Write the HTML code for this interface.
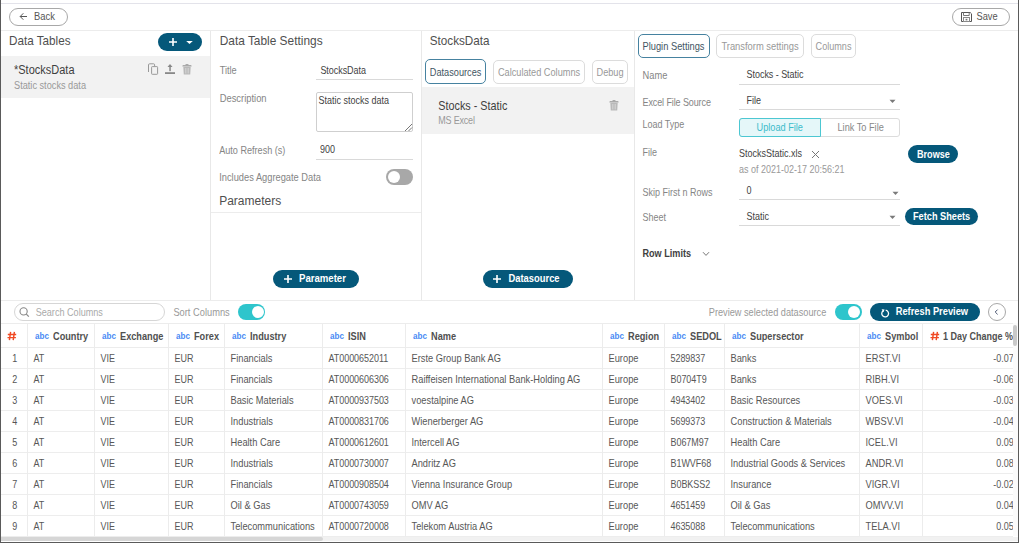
<!DOCTYPE html>
<html><head><meta charset="utf-8"><style>
html,body{margin:0;padding:0;width:1019px;height:543px;overflow:hidden;background:#fff;}
body{position:relative;font-family:"Liberation Sans", sans-serif;}
body>div,body>svg{position:absolute;white-space:nowrap;}
</style></head><body>
<div style="left:1px;top:3px;width:1017px;height:1px;background:#e3e3ea"></div>
<div style="left:1px;top:30px;width:1017px;height:1px;background:#ececec"></div>
<div style="left:1px;top:300px;width:1017px;height:1px;background:#ececec"></div>
<div style="left:9px;top:8px;width:59px;height:18px;box-sizing:border-box;border:1px solid #a8a8a8;border-radius:9px"></div>
<svg style="left:19px;top:12px" width="9" height="9" viewBox="0 0 9 9"><path d="M1.2 4.5H8M4.3 1.3L1.2 4.5L4.3 7.7" fill="none" stroke="#555" stroke-width="1"/></svg>
<div style="left:34px;top:12px;font-size:9.4px;line-height:9.4px;color:#555;transform:scaleY(1.11);transform-origin:0 7.99px;">Back</div>
<div style="left:952px;top:8px;width:58px;height:18px;box-sizing:border-box;border:1px solid #a8a8a8;border-radius:9px"></div>
<svg style="left:961px;top:12px" width="11" height="10" viewBox="0 0 11 10"><path d="M0.5 0.5H9.2L10.5 1.8V9.5H0.5Z" fill="none" stroke="#555" stroke-width="1"/><path d="M2.5 0.5V3.5H8.2V0.5" fill="none" stroke="#777" stroke-width="1"/><rect x="2.5" y="5.5" width="6" height="4" fill="none" stroke="#8a8a8a" stroke-width="1"/><rect x="4.6" y="6.8" width="1.8" height="1.6" fill="#777"/></svg>
<div style="left:976.5px;top:13px;font-size:9.3px;line-height:9.3px;color:#555;transform:scaleY(1.11);transform-origin:0 7.91px;">Save</div>
<div style="left:210px;top:31px;width:1px;height:269px;background:#e8e8e8"></div>
<div style="left:421px;top:31px;width:1px;height:269px;background:#e8e8e8"></div>
<div style="left:634px;top:31px;width:1px;height:269px;background:#e8e8e8"></div>
<div style="left:9px;top:35px;font-size:11.7px;line-height:11.7px;color:#4f4f4f;transform:scaleY(1.11);transform-origin:0 9.94px;">Data Tables</div>
<div style="left:158px;top:33px;width:44px;height:18px;background:#05587a;border-radius:9px"></div>
<svg style="left:167.5px;top:37px" width="10" height="10" viewBox="0 0 10 10"><path d="M5 1V9M1 5H9" stroke="#fff" stroke-width="1.6"/></svg>
<svg style="left:185.5px;top:40px" width="7" height="5" viewBox="0 0 7 5"><path d="M0.2 0.9H6.8L3.5 4.1Z" fill="#fff"/></svg>
<div style="left:1px;top:56px;width:209px;height:42px;background:#f2f2f2"></div>
<div style="left:14px;top:65px;font-size:11.0px;line-height:11.0px;color:#3f3f3f;transform:scaleY(1.11);transform-origin:0 9.35px;">*StocksData</div>
<div style="left:14px;top:82px;font-size:9.2px;line-height:9.2px;color:#999;transform:scaleY(1.11);transform-origin:0 7.82px;">Static stocks data</div>
<svg style="left:147px;top:63px" width="12" height="12" viewBox="0 0 12 12"><path d="M1.5 9V1.9Q1.5 0.8 2.6 0.8H6.6Q7.6 0.8 7.6 1.8V3" fill="none" stroke="#999" stroke-width="1"/><rect x="4.6" y="3.6" width="6" height="7.7" rx="0.7" fill="none" stroke="#999" stroke-width="1"/></svg>
<svg style="left:164px;top:63px" width="12" height="12" viewBox="0 0 12 12"><path d="M3.5 4H8.5L6 1Z" fill="#888"/><rect x="5.3" y="3.8" width="1.5" height="4.4" fill="#888"/><rect x="1" y="9.2" width="10" height="1.8" fill="#888"/></svg>
<svg style="left:181px;top:63px" width="12" height="12" viewBox="0 0 12 12"><path d="M1.3 3.4L1.8 2H4.3L4.8 1H7.2L7.7 2H10.2L10.7 3.4Z" fill="#aaa"/><path d="M2.3 3.8H9.7L9.2 11.6H2.8Z" fill="#b9b9b9"/><path d="M4.5 5V10.5M6 5V10.5M7.5 5V10.5" stroke="#d6d6d6" stroke-width="0.7"/></svg>
<div style="left:219.7px;top:36px;font-size:11.9px;line-height:11.9px;color:#4f4f4f;transform:scaleY(1.11);transform-origin:0 10.12px;">Data Table Settings</div>
<div style="left:219.7px;top:67px;font-size:9.2px;line-height:9.2px;color:#858585;transform:scaleY(1.11);transform-origin:0 7.82px;">Title</div>
<div style="left:320.4px;top:67px;font-size:9.0px;line-height:9.0px;color:#3f3f3f;transform:scaleY(1.11);transform-origin:0 7.65px;letter-spacing:-0.050px;">StocksData</div>
<div style="left:316px;top:79px;width:97px;height:1px;background:#d9d9d9"></div>
<div style="left:219.7px;top:94px;font-size:9.4px;line-height:9.4px;color:#858585;transform:scaleY(1.11);transform-origin:0 7.99px;">Description</div>
<div style="left:316px;top:92px;width:97px;height:40px;box-sizing:border-box;border:1px solid #cfcfcf;border-radius:2px"></div>
<div style="left:318.6px;top:97px;font-size:9.0px;line-height:9.0px;color:#3f3f3f;transform:scaleY(1.11);transform-origin:0 7.65px;">Static stocks data</div>
<svg style="left:404px;top:123px" width="9" height="9" viewBox="0 0 9 9"><path d="M1 8L8 1M4.5 8L8 4.5" stroke="#666" stroke-width="0.9"/></svg>
<div style="left:219.2px;top:147px;font-size:9.1px;line-height:9.1px;color:#858585;transform:scaleY(1.11);transform-origin:0 7.73px;">Auto Refresh (s)</div>
<div style="left:320px;top:146px;font-size:9.0px;line-height:9.0px;color:#3f3f3f;transform:scaleY(1.11);transform-origin:0 7.65px;">900</div>
<div style="left:316px;top:159px;width:97px;height:1px;background:#d9d9d9"></div>
<div style="left:219.2px;top:174px;font-size:9.3px;line-height:9.3px;color:#858585;transform:scaleY(1.11);transform-origin:0 7.91px;">Includes Aggregate Data</div>
<div style="left:385.5px;top:169px;width:27.5px;height:16px;background:#a8a8a8;border-radius:8px"></div>
<div style="left:387.5px;top:171px;width:12px;height:12px;background:#fff;border-radius:50%"></div>
<div style="left:219.2px;top:195px;font-size:12.0px;line-height:12.0px;color:#4f4f4f;transform:scaleY(1.11);transform-origin:0 10.20px;">Parameters</div>
<div style="left:211px;top:212px;width:210px;height:1px;background:#ececec"></div>
<div style="left:273px;top:270px;width:86px;height:18px;background:#05587a;border-radius:9px"></div>
<svg style="left:283px;top:274px" width="10" height="10" viewBox="0 0 10 10"><path d="M5 1V9M1 5H9" stroke="#fff" stroke-width="1.6"/></svg>
<div style="left:299px;top:274px;font-size:9.6px;line-height:9.6px;color:#fff;font-weight:bold;transform:scaleY(1.11);transform-origin:0 8.16px;">Parameter</div>
<div style="left:429.8px;top:35px;font-size:11.7px;line-height:11.7px;color:#4f4f4f;transform:scaleY(1.11);transform-origin:0 9.94px;">StocksData</div>
<div style="left:425px;top:59px;width:61px;height:25px;box-sizing:border-box;border:1.5px solid #4682a0;border-radius:5px"></div>
<div style="left:429.8px;top:69px;font-size:9.2px;line-height:9.2px;color:#3f5563;transform:scaleY(1.11);transform-origin:0 7.82px;">Datasources</div>
<div style="left:493px;top:60px;width:92px;height:24px;box-sizing:border-box;border:1px solid #dcdcdc;border-radius:5px"></div>
<div style="left:497.9px;top:69px;font-size:9.2px;line-height:9.2px;color:#999;transform:scaleY(1.11);transform-origin:0 7.82px;">Calculated Columns</div>
<div style="left:592px;top:60px;width:36px;height:24px;box-sizing:border-box;border:1px solid #dcdcdc;border-radius:5px"></div>
<div style="left:596.5px;top:69px;font-size:9.2px;line-height:9.2px;color:#999;transform:scaleY(1.11);transform-origin:0 7.82px;">Debug</div>
<div style="left:422px;top:87px;width:212px;height:47px;background:#f2f2f2"></div>
<div style="left:438.3px;top:101px;font-size:10.8px;line-height:10.8px;color:#3f3f3f;transform:scaleY(1.11);transform-origin:0 9.18px;">Stocks - Static</div>
<div style="left:438.3px;top:117px;font-size:9.0px;line-height:9.0px;color:#999;transform:scaleY(1.11);transform-origin:0 7.65px;letter-spacing:-0.200px;">MS Excel</div>
<svg style="left:608px;top:99px" width="12" height="12" viewBox="0 0 12 12"><path d="M1.3 3.4L1.8 2H4.3L4.8 1H7.2L7.7 2H10.2L10.7 3.4Z" fill="#aaa"/><path d="M2.3 3.8H9.7L9.2 11.6H2.8Z" fill="#b9b9b9"/><path d="M4.5 5V10.5M6 5V10.5M7.5 5V10.5" stroke="#d6d6d6" stroke-width="0.7"/></svg>
<div style="left:483px;top:270px;width:90px;height:18px;background:#05587a;border-radius:9px"></div>
<svg style="left:492px;top:274px" width="10" height="10" viewBox="0 0 10 10"><path d="M5 1V9M1 5H9" stroke="#fff" stroke-width="1.6"/></svg>
<div style="left:508.5px;top:274px;font-size:9.4px;line-height:9.4px;color:#fff;font-weight:bold;transform:scaleY(1.11);transform-origin:0 7.99px;">Datasource</div>
<div style="left:638px;top:34px;width:72px;height:24px;box-sizing:border-box;border:1.5px solid #4682a0;border-radius:5px"></div>
<div style="left:642.5px;top:43px;font-size:9.3px;line-height:9.3px;color:#3f5563;transform:scaleY(1.11);transform-origin:0 7.91px;">Plugin Settings</div>
<div style="left:716px;top:34px;width:88px;height:24px;box-sizing:border-box;border:1px solid #dcdcdc;border-radius:5px"></div>
<div style="left:721.4px;top:42px;font-size:9.4px;line-height:9.4px;color:#999;transform:scaleY(1.11);transform-origin:0 7.99px;">Transform settings</div>
<div style="left:811px;top:34px;width:45px;height:24px;box-sizing:border-box;border:1px solid #dcdcdc;border-radius:5px"></div>
<div style="left:815.6px;top:43px;font-size:9.1px;line-height:9.1px;color:#999;transform:scaleY(1.11);transform-origin:0 7.73px;">Columns</div>
<div style="left:642.5px;top:72px;font-size:9.3px;line-height:9.3px;color:#858585;transform:scaleY(1.11);transform-origin:0 7.91px;">Name</div>
<div style="left:746.6px;top:71px;font-size:9.0px;line-height:9.0px;color:#3f3f3f;transform:scaleY(1.11);transform-origin:0 7.65px;letter-spacing:-0.050px;">Stocks - Static</div>
<div style="left:739px;top:84px;width:161px;height:1px;background:#d9d9d9"></div>
<div style="left:642.5px;top:99px;font-size:9.0px;line-height:9.0px;color:#858585;transform:scaleY(1.11);transform-origin:0 7.65px;letter-spacing:-0.100px;">Excel File Source</div>
<div style="left:746.6px;top:97px;font-size:9.0px;line-height:9.0px;color:#3f3f3f;transform:scaleY(1.11);transform-origin:0 7.65px;">File</div>
<div style="left:739px;top:109px;width:161px;height:1px;background:#d9d9d9"></div>
<svg style="left:889px;top:99px" width="7" height="5" viewBox="0 0 7 5"><path d="M0.5 0.8H6.5L3.5 4Z" fill="#7a7a7a"/></svg>
<div style="left:642.5px;top:121px;font-size:9.0px;line-height:9.0px;color:#858585;transform:scaleY(1.11);transform-origin:0 7.65px;">Load Type</div>
<div style="left:739px;top:118px;width:161px;height:19px;box-sizing:border-box;border:1px solid #dcdcdc;border-radius:3px"></div>
<div style="left:739px;top:118px;width:82px;height:19px;box-sizing:border-box;border:1px solid #4cc7d2;background:#e5f7f9;border-radius:3px 0 0 3px"></div>
<div style="left:756.5px;top:124px;font-size:9.2px;line-height:9.2px;color:#3cbccb;transform:scaleY(1.11);transform-origin:0 7.82px;">Upload File</div>
<div style="left:837.5px;top:124px;font-size:9.2px;line-height:9.2px;color:#888;transform:scaleY(1.11);transform-origin:0 7.82px;">Link To File</div>
<div style="left:642.5px;top:149px;font-size:9.0px;line-height:9.0px;color:#858585;transform:scaleY(1.11);transform-origin:0 7.65px;">File</div>
<div style="left:739px;top:150px;font-size:9.0px;line-height:9.0px;color:#3f3f3f;transform:scaleY(1.11);transform-origin:0 7.65px;">StocksStatic.xls</div>
<svg style="left:811px;top:150px" width="9" height="9" viewBox="0 0 9 9"><path d="M1 1L8 8M8 1L1 8" stroke="#777" stroke-width="1"/></svg>
<div style="left:739px;top:166px;font-size:9.0px;line-height:9.0px;color:#999;transform:scaleY(1.11);transform-origin:0 7.65px;">as of 2021-02-17 20:56:21</div>
<div style="left:908px;top:145px;width:50px;height:18px;background:#05587a;border-radius:9px"></div>
<div style="left:917px;top:151px;font-size:9.1px;line-height:9.1px;color:#fff;font-weight:bold;transform:scaleY(1.11);transform-origin:0 7.73px;">Browse</div>
<div style="left:642.5px;top:189px;font-size:9.0px;line-height:9.0px;color:#858585;transform:scaleY(1.11);transform-origin:0 7.65px;">Skip First n Rows</div>
<div style="left:746.6px;top:187px;font-size:9.0px;line-height:9.0px;color:#3f3f3f;transform:scaleY(1.11);transform-origin:0 7.65px;">0</div>
<div style="left:739px;top:199px;width:161px;height:1px;background:#d9d9d9"></div>
<svg style="left:892px;top:191px" width="7" height="5" viewBox="0 0 7 5"><path d="M0.5 0.8H6.5L3.5 4Z" fill="#7a7a7a"/></svg>
<div style="left:642.5px;top:214px;font-size:9.0px;line-height:9.0px;color:#858585;transform:scaleY(1.11);transform-origin:0 7.65px;">Sheet</div>
<div style="left:746.6px;top:213px;font-size:9.0px;line-height:9.0px;color:#3f3f3f;transform:scaleY(1.11);transform-origin:0 7.65px;">Static</div>
<div style="left:739px;top:225px;width:161px;height:1px;background:#d9d9d9"></div>
<svg style="left:889px;top:215px" width="7" height="5" viewBox="0 0 7 5"><path d="M0.5 0.8H6.5L3.5 4Z" fill="#7a7a7a"/></svg>
<div style="left:905px;top:208px;width:73px;height:17px;background:#05587a;border-radius:9px"></div>
<div style="left:913px;top:213px;font-size:9.2px;line-height:9.2px;color:#fff;font-weight:bold;transform:scaleY(1.11);transform-origin:0 7.82px;">Fetch Sheets</div>
<div style="left:642.5px;top:250px;font-size:9.1px;line-height:9.1px;color:#3f3f3f;font-weight:bold;transform:scaleY(1.11);transform-origin:0 7.73px;">Row Limits</div>
<svg style="left:702px;top:251px" width="8" height="6" viewBox="0 0 8 6"><path d="M1 1.2L4 4.4L7 1.2" fill="none" stroke="#777" stroke-width="1"/></svg>
<div style="left:14px;top:303px;width:151px;height:18px;box-sizing:border-box;border:1px solid #d6d6d6;border-radius:9px"></div>
<svg style="left:19px;top:307px" width="11" height="11" viewBox="0 0 11 11"><circle cx="4.6" cy="4.4" r="3.6" fill="none" stroke="#888" stroke-width="1.1"/><path d="M7.3 7.1L9.8 9.6" stroke="#888" stroke-width="1.2"/></svg>
<div style="left:35.7px;top:309px;font-size:9.1px;line-height:9.1px;color:#aaa;transform:scaleY(1.11);transform-origin:0 7.73px;">Search Columns</div>
<div style="left:173.4px;top:309px;font-size:9.3px;line-height:9.3px;color:#999;transform:scaleY(1.11);transform-origin:0 7.91px;">Sort Columns</div>
<div style="left:238px;top:304px;width:27px;height:16px;background:#2ec5cc;border-radius:8px"></div>
<div style="left:251.5px;top:306px;width:12px;height:12px;background:#fff;border-radius:50%"></div>
<div style="left:708.8px;top:309px;font-size:9.2px;line-height:9.2px;color:#999;transform:scaleY(1.11);transform-origin:0 7.82px;">Preview selected datasource</div>
<div style="left:834.5px;top:304px;width:27px;height:16px;background:#2ec5cc;border-radius:8px"></div>
<div style="left:848px;top:306px;width:12px;height:12px;background:#fff;border-radius:50%"></div>
<div style="left:870px;top:303px;width:110px;height:18px;background:#05587a;border-radius:9px"></div>
<svg style="left:880px;top:308px" width="10" height="10" viewBox="0 0 10 10"><path d="M3.3 2.7A3.4 3.4 0 1 0 5.7 2.2" fill="none" stroke="#fff" stroke-width="1.3"/><path d="M1.6 1.2L4.6 1.4L3.4 4.2Z" fill="#fff"/></svg>
<div style="left:895.7px;top:308px;font-size:9.3px;line-height:9.3px;color:#fff;font-weight:bold;transform:scaleY(1.11);transform-origin:0 7.91px;">Refresh Preview</div>
<div style="left:987.5px;top:303px;width:18px;height:18px;box-sizing:border-box;border:1px solid #a8a8a8;border-radius:50%"></div>
<svg style="left:994px;top:309px" width="5" height="6" viewBox="0 0 5 6"><path d="M3.6 0.6L1.2 3L3.6 5.4" fill="none" stroke="#4a5570" stroke-width="1"/></svg>
<div style="left:1px;top:323px;width:1012px;height:1px;background:#ececec"></div>
<div style="left:1px;top:347px;width:1012px;height:1px;background:#ececec"></div>
<div style="left:1px;top:368px;width:1012px;height:1px;background:#ededed"></div>
<div style="left:1px;top:389px;width:1012px;height:1px;background:#ededed"></div>
<div style="left:1px;top:410px;width:1012px;height:1px;background:#ededed"></div>
<div style="left:1px;top:431px;width:1012px;height:1px;background:#ededed"></div>
<div style="left:1px;top:452px;width:1012px;height:1px;background:#ededed"></div>
<div style="left:1px;top:473px;width:1012px;height:1px;background:#ededed"></div>
<div style="left:1px;top:494px;width:1012px;height:1px;background:#ededed"></div>
<div style="left:1px;top:515px;width:1012px;height:1px;background:#ededed"></div>
<div style="left:1px;top:536px;width:1012px;height:1px;background:#ededed"></div>
<div style="left:27px;top:323px;width:1px;height:213px;background:#ececec"></div>
<div style="left:94px;top:323px;width:1px;height:213px;background:#ececec"></div>
<div style="left:168px;top:323px;width:1px;height:213px;background:#ececec"></div>
<div style="left:224px;top:323px;width:1px;height:213px;background:#ececec"></div>
<div style="left:322px;top:323px;width:1px;height:213px;background:#ececec"></div>
<div style="left:405px;top:323px;width:1px;height:213px;background:#ececec"></div>
<div style="left:602px;top:323px;width:1px;height:213px;background:#ececec"></div>
<div style="left:664px;top:323px;width:1px;height:213px;background:#ececec"></div>
<div style="left:724px;top:323px;width:1px;height:213px;background:#ececec"></div>
<div style="left:859px;top:323px;width:1px;height:213px;background:#ececec"></div>
<div style="left:922px;top:323px;width:1px;height:213px;background:#ececec"></div>
<svg style="left:7px;top:330.5px" width="10" height="10" viewBox="0 0 10 10"><path d="M3.6 0.8L2.4 9.2M7.4 0.8L6.2 9.2M0.8 3.4H9.2M0.5 6.6H8.9" stroke="#f04a24" stroke-width="1.45"/></svg>
<div style="left:35px;top:333px;font-size:8.1px;line-height:8.1px;color:#4a8af4;font-weight:bold;transform:scaleY(1.11);transform-origin:0 6.88px;">abc</div>
<div style="left:53px;top:333px;font-size:9.2px;line-height:9.2px;color:#505050;font-weight:bold;transform:scaleY(1.11);transform-origin:0 7.82px;">Country</div>
<div style="left:102px;top:333px;font-size:8.1px;line-height:8.1px;color:#4a8af4;font-weight:bold;transform:scaleY(1.11);transform-origin:0 6.88px;">abc</div>
<div style="left:120px;top:333px;font-size:9.2px;line-height:9.2px;color:#505050;font-weight:bold;transform:scaleY(1.11);transform-origin:0 7.82px;">Exchange</div>
<div style="left:176px;top:333px;font-size:8.1px;line-height:8.1px;color:#4a8af4;font-weight:bold;transform:scaleY(1.11);transform-origin:0 6.88px;">abc</div>
<div style="left:194px;top:333px;font-size:9.2px;line-height:9.2px;color:#505050;font-weight:bold;transform:scaleY(1.11);transform-origin:0 7.82px;">Forex</div>
<div style="left:232px;top:333px;font-size:8.1px;line-height:8.1px;color:#4a8af4;font-weight:bold;transform:scaleY(1.11);transform-origin:0 6.88px;">abc</div>
<div style="left:250px;top:333px;font-size:9.2px;line-height:9.2px;color:#505050;font-weight:bold;transform:scaleY(1.11);transform-origin:0 7.82px;">Industry</div>
<div style="left:330px;top:333px;font-size:8.1px;line-height:8.1px;color:#4a8af4;font-weight:bold;transform:scaleY(1.11);transform-origin:0 6.88px;">abc</div>
<div style="left:348px;top:333px;font-size:9.2px;line-height:9.2px;color:#505050;font-weight:bold;transform:scaleY(1.11);transform-origin:0 7.82px;">ISIN</div>
<div style="left:413px;top:333px;font-size:8.1px;line-height:8.1px;color:#4a8af4;font-weight:bold;transform:scaleY(1.11);transform-origin:0 6.88px;">abc</div>
<div style="left:431px;top:333px;font-size:9.2px;line-height:9.2px;color:#505050;font-weight:bold;transform:scaleY(1.11);transform-origin:0 7.82px;">Name</div>
<div style="left:610px;top:333px;font-size:8.1px;line-height:8.1px;color:#4a8af4;font-weight:bold;transform:scaleY(1.11);transform-origin:0 6.88px;">abc</div>
<div style="left:628px;top:333px;font-size:9.2px;line-height:9.2px;color:#505050;font-weight:bold;transform:scaleY(1.11);transform-origin:0 7.82px;">Region</div>
<div style="left:672px;top:333px;font-size:8.1px;line-height:8.1px;color:#4a8af4;font-weight:bold;transform:scaleY(1.11);transform-origin:0 6.88px;">abc</div>
<div style="left:690px;top:333px;font-size:9.2px;line-height:9.2px;color:#505050;font-weight:bold;transform:scaleY(1.11);transform-origin:0 7.82px;">SEDOL</div>
<div style="left:732px;top:333px;font-size:8.1px;line-height:8.1px;color:#4a8af4;font-weight:bold;transform:scaleY(1.11);transform-origin:0 6.88px;">abc</div>
<div style="left:750px;top:333px;font-size:9.2px;line-height:9.2px;color:#505050;font-weight:bold;transform:scaleY(1.11);transform-origin:0 7.82px;">Supersector</div>
<div style="left:867px;top:333px;font-size:8.1px;line-height:8.1px;color:#4a8af4;font-weight:bold;transform:scaleY(1.11);transform-origin:0 6.88px;">abc</div>
<div style="left:885px;top:333px;font-size:9.2px;line-height:9.2px;color:#505050;font-weight:bold;transform:scaleY(1.11);transform-origin:0 7.82px;">Symbol</div>
<svg style="left:930px;top:330.5px" width="10" height="10" viewBox="0 0 10 10"><path d="M3.6 0.8L2.4 9.2M7.4 0.8L6.2 9.2M0.8 3.4H9.2M0.5 6.6H8.9" stroke="#f04a24" stroke-width="1.45"/></svg>
<div style="left:943px;top:333px;font-size:9.0px;line-height:9.0px;color:#505050;font-weight:bold;transform:scaleY(1.11);transform-origin:0 7.65px;">1 Day Change %</div>
<div style="left:12.3px;top:355px;font-size:9.0px;line-height:9.0px;color:#555;transform:scaleY(1.11);transform-origin:0 7.65px;">1</div>
<div style="left:33.5px;top:355px;font-size:9.0px;line-height:9.0px;color:#575757;transform:scaleY(1.11);transform-origin:0 7.65px;">AT</div>
<div style="left:100.5px;top:355px;font-size:9.0px;line-height:9.0px;color:#575757;transform:scaleY(1.11);transform-origin:0 7.65px;">VIE</div>
<div style="left:174.5px;top:355px;font-size:9.0px;line-height:9.0px;color:#575757;transform:scaleY(1.11);transform-origin:0 7.65px;">EUR</div>
<div style="left:230.5px;top:355px;font-size:9.3px;line-height:9.3px;color:#575757;transform:scaleY(1.11);transform-origin:0 7.91px;">Financials</div>
<div style="left:328.5px;top:355px;font-size:9.0px;line-height:9.0px;color:#575757;transform:scaleY(1.11);transform-origin:0 7.65px;letter-spacing:-0.050px;">AT0000652011</div>
<div style="left:411.5px;top:355px;font-size:9.3px;line-height:9.3px;color:#575757;transform:scaleY(1.11);transform-origin:0 7.91px;">Erste Group Bank AG</div>
<div style="left:608.5px;top:355px;font-size:9.3px;line-height:9.3px;color:#575757;transform:scaleY(1.11);transform-origin:0 7.91px;">Europe</div>
<div style="left:670.5px;top:355px;font-size:9.0px;line-height:9.0px;color:#575757;transform:scaleY(1.11);transform-origin:0 7.65px;letter-spacing:-0.050px;">5289837</div>
<div style="left:730.5px;top:355px;font-size:9.3px;line-height:9.3px;color:#575757;transform:scaleY(1.11);transform-origin:0 7.91px;">Banks</div>
<div style="left:865.5px;top:355px;font-size:9.3px;line-height:9.3px;color:#575757;transform:scaleY(1.11);transform-origin:0 7.91px;">ERST.VI</div>
<div style="right:5.2000000000000455px;text-align:right;top:355px;font-size:9.0px;line-height:9.0px;color:#5a5a5a;transform:scaleY(1.11);transform-origin:0 7.65px;">-0.07</div>
<div style="left:12.3px;top:376px;font-size:9.0px;line-height:9.0px;color:#555;transform:scaleY(1.11);transform-origin:0 7.65px;">2</div>
<div style="left:33.5px;top:376px;font-size:9.0px;line-height:9.0px;color:#575757;transform:scaleY(1.11);transform-origin:0 7.65px;">AT</div>
<div style="left:100.5px;top:376px;font-size:9.0px;line-height:9.0px;color:#575757;transform:scaleY(1.11);transform-origin:0 7.65px;">VIE</div>
<div style="left:174.5px;top:376px;font-size:9.0px;line-height:9.0px;color:#575757;transform:scaleY(1.11);transform-origin:0 7.65px;">EUR</div>
<div style="left:230.5px;top:376px;font-size:9.3px;line-height:9.3px;color:#575757;transform:scaleY(1.11);transform-origin:0 7.91px;">Financials</div>
<div style="left:328.5px;top:376px;font-size:9.0px;line-height:9.0px;color:#575757;transform:scaleY(1.11);transform-origin:0 7.65px;letter-spacing:-0.050px;">AT0000606306</div>
<div style="left:411.5px;top:376px;font-size:9.3px;line-height:9.3px;color:#575757;transform:scaleY(1.11);transform-origin:0 7.91px;">Raiffeisen International Bank-Holding AG</div>
<div style="left:608.5px;top:376px;font-size:9.3px;line-height:9.3px;color:#575757;transform:scaleY(1.11);transform-origin:0 7.91px;">Europe</div>
<div style="left:670.5px;top:376px;font-size:9.0px;line-height:9.0px;color:#575757;transform:scaleY(1.11);transform-origin:0 7.65px;letter-spacing:-0.050px;">B0704T9</div>
<div style="left:730.5px;top:376px;font-size:9.3px;line-height:9.3px;color:#575757;transform:scaleY(1.11);transform-origin:0 7.91px;">Banks</div>
<div style="left:865.5px;top:376px;font-size:9.3px;line-height:9.3px;color:#575757;transform:scaleY(1.11);transform-origin:0 7.91px;">RIBH.VI</div>
<div style="right:5.2000000000000455px;text-align:right;top:376px;font-size:9.0px;line-height:9.0px;color:#5a5a5a;transform:scaleY(1.11);transform-origin:0 7.65px;">-0.06</div>
<div style="left:12.3px;top:397px;font-size:9.0px;line-height:9.0px;color:#555;transform:scaleY(1.11);transform-origin:0 7.65px;">3</div>
<div style="left:33.5px;top:397px;font-size:9.0px;line-height:9.0px;color:#575757;transform:scaleY(1.11);transform-origin:0 7.65px;">AT</div>
<div style="left:100.5px;top:397px;font-size:9.0px;line-height:9.0px;color:#575757;transform:scaleY(1.11);transform-origin:0 7.65px;">VIE</div>
<div style="left:174.5px;top:397px;font-size:9.0px;line-height:9.0px;color:#575757;transform:scaleY(1.11);transform-origin:0 7.65px;">EUR</div>
<div style="left:230.5px;top:397px;font-size:9.3px;line-height:9.3px;color:#575757;transform:scaleY(1.11);transform-origin:0 7.91px;">Basic Materials</div>
<div style="left:328.5px;top:397px;font-size:9.0px;line-height:9.0px;color:#575757;transform:scaleY(1.11);transform-origin:0 7.65px;letter-spacing:-0.050px;">AT0000937503</div>
<div style="left:411.5px;top:397px;font-size:9.3px;line-height:9.3px;color:#575757;transform:scaleY(1.11);transform-origin:0 7.91px;">voestalpine AG</div>
<div style="left:608.5px;top:397px;font-size:9.3px;line-height:9.3px;color:#575757;transform:scaleY(1.11);transform-origin:0 7.91px;">Europe</div>
<div style="left:670.5px;top:397px;font-size:9.0px;line-height:9.0px;color:#575757;transform:scaleY(1.11);transform-origin:0 7.65px;letter-spacing:-0.050px;">4943402</div>
<div style="left:730.5px;top:397px;font-size:9.3px;line-height:9.3px;color:#575757;transform:scaleY(1.11);transform-origin:0 7.91px;">Basic Resources</div>
<div style="left:865.5px;top:397px;font-size:9.3px;line-height:9.3px;color:#575757;transform:scaleY(1.11);transform-origin:0 7.91px;">VOES.VI</div>
<div style="right:5.2000000000000455px;text-align:right;top:397px;font-size:9.0px;line-height:9.0px;color:#5a5a5a;transform:scaleY(1.11);transform-origin:0 7.65px;">-0.03</div>
<div style="left:12.3px;top:418px;font-size:9.0px;line-height:9.0px;color:#555;transform:scaleY(1.11);transform-origin:0 7.65px;">4</div>
<div style="left:33.5px;top:418px;font-size:9.0px;line-height:9.0px;color:#575757;transform:scaleY(1.11);transform-origin:0 7.65px;">AT</div>
<div style="left:100.5px;top:418px;font-size:9.0px;line-height:9.0px;color:#575757;transform:scaleY(1.11);transform-origin:0 7.65px;">VIE</div>
<div style="left:174.5px;top:418px;font-size:9.0px;line-height:9.0px;color:#575757;transform:scaleY(1.11);transform-origin:0 7.65px;">EUR</div>
<div style="left:230.5px;top:418px;font-size:9.3px;line-height:9.3px;color:#575757;transform:scaleY(1.11);transform-origin:0 7.91px;">Industrials</div>
<div style="left:328.5px;top:418px;font-size:9.0px;line-height:9.0px;color:#575757;transform:scaleY(1.11);transform-origin:0 7.65px;letter-spacing:-0.050px;">AT0000831706</div>
<div style="left:411.5px;top:418px;font-size:9.3px;line-height:9.3px;color:#575757;transform:scaleY(1.11);transform-origin:0 7.91px;">Wienerberger AG</div>
<div style="left:608.5px;top:418px;font-size:9.3px;line-height:9.3px;color:#575757;transform:scaleY(1.11);transform-origin:0 7.91px;">Europe</div>
<div style="left:670.5px;top:418px;font-size:9.0px;line-height:9.0px;color:#575757;transform:scaleY(1.11);transform-origin:0 7.65px;letter-spacing:-0.050px;">5699373</div>
<div style="left:730.5px;top:418px;font-size:9.3px;line-height:9.3px;color:#575757;transform:scaleY(1.11);transform-origin:0 7.91px;">Construction &amp; Materials</div>
<div style="left:865.5px;top:418px;font-size:9.3px;line-height:9.3px;color:#575757;transform:scaleY(1.11);transform-origin:0 7.91px;">WBSV.VI</div>
<div style="right:5.2000000000000455px;text-align:right;top:418px;font-size:9.0px;line-height:9.0px;color:#5a5a5a;transform:scaleY(1.11);transform-origin:0 7.65px;">-0.04</div>
<div style="left:12.3px;top:439px;font-size:9.0px;line-height:9.0px;color:#555;transform:scaleY(1.11);transform-origin:0 7.65px;">5</div>
<div style="left:33.5px;top:439px;font-size:9.0px;line-height:9.0px;color:#575757;transform:scaleY(1.11);transform-origin:0 7.65px;">AT</div>
<div style="left:100.5px;top:439px;font-size:9.0px;line-height:9.0px;color:#575757;transform:scaleY(1.11);transform-origin:0 7.65px;">VIE</div>
<div style="left:174.5px;top:439px;font-size:9.0px;line-height:9.0px;color:#575757;transform:scaleY(1.11);transform-origin:0 7.65px;">EUR</div>
<div style="left:230.5px;top:439px;font-size:9.3px;line-height:9.3px;color:#575757;transform:scaleY(1.11);transform-origin:0 7.91px;">Health Care</div>
<div style="left:328.5px;top:439px;font-size:9.0px;line-height:9.0px;color:#575757;transform:scaleY(1.11);transform-origin:0 7.65px;letter-spacing:-0.050px;">AT0000612601</div>
<div style="left:411.5px;top:439px;font-size:9.3px;line-height:9.3px;color:#575757;transform:scaleY(1.11);transform-origin:0 7.91px;">Intercell AG</div>
<div style="left:608.5px;top:439px;font-size:9.3px;line-height:9.3px;color:#575757;transform:scaleY(1.11);transform-origin:0 7.91px;">Europe</div>
<div style="left:670.5px;top:439px;font-size:9.0px;line-height:9.0px;color:#575757;transform:scaleY(1.11);transform-origin:0 7.65px;letter-spacing:-0.050px;">B067M97</div>
<div style="left:730.5px;top:439px;font-size:9.3px;line-height:9.3px;color:#575757;transform:scaleY(1.11);transform-origin:0 7.91px;">Health Care</div>
<div style="left:865.5px;top:439px;font-size:9.3px;line-height:9.3px;color:#575757;transform:scaleY(1.11);transform-origin:0 7.91px;">ICEL.VI</div>
<div style="right:5.2000000000000455px;text-align:right;top:439px;font-size:9.0px;line-height:9.0px;color:#5a5a5a;transform:scaleY(1.11);transform-origin:0 7.65px;">0.09</div>
<div style="left:12.3px;top:460px;font-size:9.0px;line-height:9.0px;color:#555;transform:scaleY(1.11);transform-origin:0 7.65px;">6</div>
<div style="left:33.5px;top:460px;font-size:9.0px;line-height:9.0px;color:#575757;transform:scaleY(1.11);transform-origin:0 7.65px;">AT</div>
<div style="left:100.5px;top:460px;font-size:9.0px;line-height:9.0px;color:#575757;transform:scaleY(1.11);transform-origin:0 7.65px;">VIE</div>
<div style="left:174.5px;top:460px;font-size:9.0px;line-height:9.0px;color:#575757;transform:scaleY(1.11);transform-origin:0 7.65px;">EUR</div>
<div style="left:230.5px;top:460px;font-size:9.3px;line-height:9.3px;color:#575757;transform:scaleY(1.11);transform-origin:0 7.91px;">Industrials</div>
<div style="left:328.5px;top:460px;font-size:9.0px;line-height:9.0px;color:#575757;transform:scaleY(1.11);transform-origin:0 7.65px;letter-spacing:-0.050px;">AT0000730007</div>
<div style="left:411.5px;top:460px;font-size:9.3px;line-height:9.3px;color:#575757;transform:scaleY(1.11);transform-origin:0 7.91px;">Andritz AG</div>
<div style="left:608.5px;top:460px;font-size:9.3px;line-height:9.3px;color:#575757;transform:scaleY(1.11);transform-origin:0 7.91px;">Europe</div>
<div style="left:670.5px;top:460px;font-size:9.0px;line-height:9.0px;color:#575757;transform:scaleY(1.11);transform-origin:0 7.65px;letter-spacing:-0.050px;">B1WVF68</div>
<div style="left:730.5px;top:460px;font-size:9.3px;line-height:9.3px;color:#575757;transform:scaleY(1.11);transform-origin:0 7.91px;">Industrial Goods &amp; Services</div>
<div style="left:865.5px;top:460px;font-size:9.3px;line-height:9.3px;color:#575757;transform:scaleY(1.11);transform-origin:0 7.91px;">ANDR.VI</div>
<div style="right:5.2000000000000455px;text-align:right;top:460px;font-size:9.0px;line-height:9.0px;color:#5a5a5a;transform:scaleY(1.11);transform-origin:0 7.65px;">0.08</div>
<div style="left:12.3px;top:481px;font-size:9.0px;line-height:9.0px;color:#555;transform:scaleY(1.11);transform-origin:0 7.65px;">7</div>
<div style="left:33.5px;top:481px;font-size:9.0px;line-height:9.0px;color:#575757;transform:scaleY(1.11);transform-origin:0 7.65px;">AT</div>
<div style="left:100.5px;top:481px;font-size:9.0px;line-height:9.0px;color:#575757;transform:scaleY(1.11);transform-origin:0 7.65px;">VIE</div>
<div style="left:174.5px;top:481px;font-size:9.0px;line-height:9.0px;color:#575757;transform:scaleY(1.11);transform-origin:0 7.65px;">EUR</div>
<div style="left:230.5px;top:481px;font-size:9.3px;line-height:9.3px;color:#575757;transform:scaleY(1.11);transform-origin:0 7.91px;">Financials</div>
<div style="left:328.5px;top:481px;font-size:9.0px;line-height:9.0px;color:#575757;transform:scaleY(1.11);transform-origin:0 7.65px;letter-spacing:-0.050px;">AT0000908504</div>
<div style="left:411.5px;top:481px;font-size:9.3px;line-height:9.3px;color:#575757;transform:scaleY(1.11);transform-origin:0 7.91px;">Vienna Insurance Group</div>
<div style="left:608.5px;top:481px;font-size:9.3px;line-height:9.3px;color:#575757;transform:scaleY(1.11);transform-origin:0 7.91px;">Europe</div>
<div style="left:670.5px;top:481px;font-size:9.0px;line-height:9.0px;color:#575757;transform:scaleY(1.11);transform-origin:0 7.65px;letter-spacing:-0.050px;">B0BKSS2</div>
<div style="left:730.5px;top:481px;font-size:9.3px;line-height:9.3px;color:#575757;transform:scaleY(1.11);transform-origin:0 7.91px;">Insurance</div>
<div style="left:865.5px;top:481px;font-size:9.3px;line-height:9.3px;color:#575757;transform:scaleY(1.11);transform-origin:0 7.91px;">VIGR.VI</div>
<div style="right:5.2000000000000455px;text-align:right;top:481px;font-size:9.0px;line-height:9.0px;color:#5a5a5a;transform:scaleY(1.11);transform-origin:0 7.65px;">-0.02</div>
<div style="left:12.3px;top:502px;font-size:9.0px;line-height:9.0px;color:#555;transform:scaleY(1.11);transform-origin:0 7.65px;">8</div>
<div style="left:33.5px;top:502px;font-size:9.0px;line-height:9.0px;color:#575757;transform:scaleY(1.11);transform-origin:0 7.65px;">AT</div>
<div style="left:100.5px;top:502px;font-size:9.0px;line-height:9.0px;color:#575757;transform:scaleY(1.11);transform-origin:0 7.65px;">VIE</div>
<div style="left:174.5px;top:502px;font-size:9.0px;line-height:9.0px;color:#575757;transform:scaleY(1.11);transform-origin:0 7.65px;">EUR</div>
<div style="left:230.5px;top:502px;font-size:9.3px;line-height:9.3px;color:#575757;transform:scaleY(1.11);transform-origin:0 7.91px;">Oil &amp; Gas</div>
<div style="left:328.5px;top:502px;font-size:9.0px;line-height:9.0px;color:#575757;transform:scaleY(1.11);transform-origin:0 7.65px;letter-spacing:-0.050px;">AT0000743059</div>
<div style="left:411.5px;top:502px;font-size:9.3px;line-height:9.3px;color:#575757;transform:scaleY(1.11);transform-origin:0 7.91px;">OMV AG</div>
<div style="left:608.5px;top:502px;font-size:9.3px;line-height:9.3px;color:#575757;transform:scaleY(1.11);transform-origin:0 7.91px;">Europe</div>
<div style="left:670.5px;top:502px;font-size:9.0px;line-height:9.0px;color:#575757;transform:scaleY(1.11);transform-origin:0 7.65px;letter-spacing:-0.050px;">4651459</div>
<div style="left:730.5px;top:502px;font-size:9.3px;line-height:9.3px;color:#575757;transform:scaleY(1.11);transform-origin:0 7.91px;">Oil &amp; Gas</div>
<div style="left:865.5px;top:502px;font-size:9.3px;line-height:9.3px;color:#575757;transform:scaleY(1.11);transform-origin:0 7.91px;">OMVV.VI</div>
<div style="right:5.2000000000000455px;text-align:right;top:502px;font-size:9.0px;line-height:9.0px;color:#5a5a5a;transform:scaleY(1.11);transform-origin:0 7.65px;">0.04</div>
<div style="left:12.3px;top:523px;font-size:9.0px;line-height:9.0px;color:#555;transform:scaleY(1.11);transform-origin:0 7.65px;">9</div>
<div style="left:33.5px;top:523px;font-size:9.0px;line-height:9.0px;color:#575757;transform:scaleY(1.11);transform-origin:0 7.65px;">AT</div>
<div style="left:100.5px;top:523px;font-size:9.0px;line-height:9.0px;color:#575757;transform:scaleY(1.11);transform-origin:0 7.65px;">VIE</div>
<div style="left:174.5px;top:523px;font-size:9.0px;line-height:9.0px;color:#575757;transform:scaleY(1.11);transform-origin:0 7.65px;">EUR</div>
<div style="left:230.5px;top:523px;font-size:9.3px;line-height:9.3px;color:#575757;transform:scaleY(1.11);transform-origin:0 7.91px;">Telecommunications</div>
<div style="left:328.5px;top:523px;font-size:9.0px;line-height:9.0px;color:#575757;transform:scaleY(1.11);transform-origin:0 7.65px;letter-spacing:-0.050px;">AT0000720008</div>
<div style="left:411.5px;top:523px;font-size:9.3px;line-height:9.3px;color:#575757;transform:scaleY(1.11);transform-origin:0 7.91px;">Telekom Austria AG</div>
<div style="left:608.5px;top:523px;font-size:9.3px;line-height:9.3px;color:#575757;transform:scaleY(1.11);transform-origin:0 7.91px;">Europe</div>
<div style="left:670.5px;top:523px;font-size:9.0px;line-height:9.0px;color:#575757;transform:scaleY(1.11);transform-origin:0 7.65px;letter-spacing:-0.050px;">4635088</div>
<div style="left:730.5px;top:523px;font-size:9.3px;line-height:9.3px;color:#575757;transform:scaleY(1.11);transform-origin:0 7.91px;">Telecommunications</div>
<div style="left:865.5px;top:523px;font-size:9.3px;line-height:9.3px;color:#575757;transform:scaleY(1.11);transform-origin:0 7.91px;">TELA.VI</div>
<div style="right:5.2000000000000455px;text-align:right;top:523px;font-size:9.0px;line-height:9.0px;color:#5a5a5a;transform:scaleY(1.11);transform-origin:0 7.65px;">0.05</div>
<div style="left:1013px;top:323px;width:5px;height:213px;background:#fbfbfb"></div>
<div style="left:1013px;top:325px;width:4px;height:21px;background:#c9c9c9;border-radius:2px"></div>
<div style="left:1px;top:537px;width:1017px;height:4px;background:#f1f1f1"></div>
<div style="left:1px;top:537px;width:322px;height:4px;background:#d6d6d6;border-radius:0 2px 2px 0"></div>
<div style="left:0px;top:0px;width:1px;height:543px;background:#5a5a5a"></div>
<div style="left:1018px;top:0px;width:1px;height:543px;background:#5a5a5a"></div>
<div style="left:0px;top:542px;width:1019px;height:1px;background:#5a5a5a"></div>
</body></html>
